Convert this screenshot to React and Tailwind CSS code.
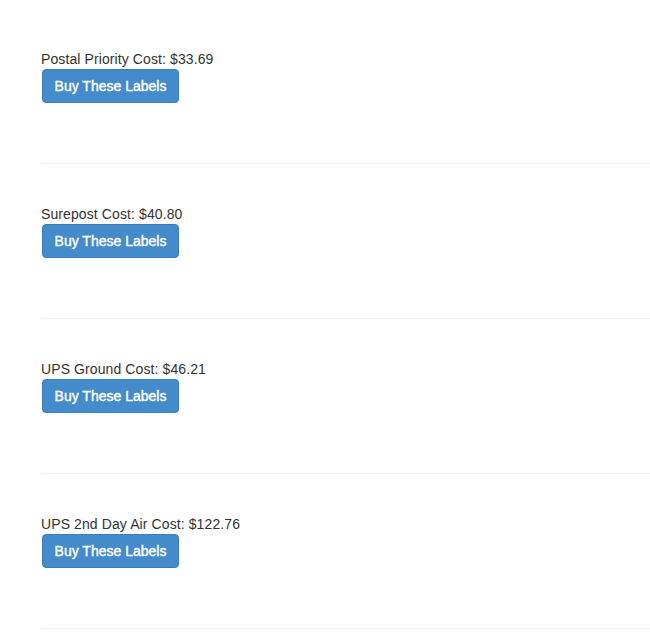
import React from "react";

const rates = [
  { label: "Postal Priority Cost", cost: "$33.69" },
  { label: "Surepost Cost", cost: "$40.80" },
  { label: "UPS Ground Cost", cost: "$46.21" },
  { label: "UPS 2nd Day Air Cost", cost: "$122.76" },
];

function RateRow({ rate }) {
  return (
    <div>
      <div className="pt-10">
        <div className="text-[14px] leading-[20px] tracking-[0.1px] text-[#333]">
          {rate.label}: {rate.cost}
        </div>
        <button className="ml-px block h-[34px] w-[137px] whitespace-nowrap rounded-[4px] border border-[#3a7dbd] bg-[#438bca] px-0 text-center text-[14px] leading-[20px] text-white [-webkit-text-stroke:0.4px_white]">
          Buy These Labels
        </button>
      </div>
      <hr className="mt-[60px] border-0 border-t border-[#eee]" />
    </div>
  );
}

export default function App() {
  return (
    <div
      className="min-h-screen bg-white pl-[41px] pt-[9px]"
      style={{ fontFamily: "'Liberation Sans', Arial, sans-serif" }}
    >
      {rates.map((r) => (
        <RateRow key={r.label} rate={r} />
      ))}
    </div>
  );
}
